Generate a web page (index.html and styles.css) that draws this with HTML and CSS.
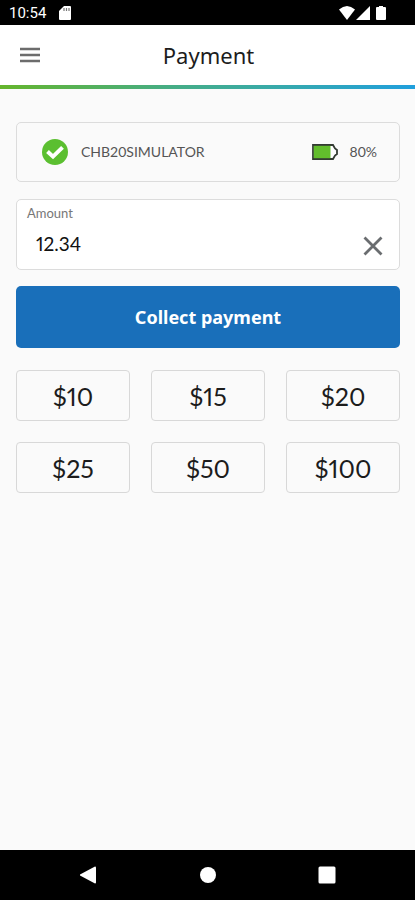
FILE: index.html
```html
<!DOCTYPE html>
<html lang="en">
<head>
<meta charset="utf-8">
<meta name="viewport" content="width=device-width, initial-scale=1">
<title>Payment</title>
<link rel="stylesheet" href="styles.css">
</head>
<body>
<div class="status-bar">
  <div class="status-group">
    <span class="clock">10:54</span>
    <svg width="12" height="14" viewBox="0 0 12 14" aria-hidden="true"><path d="M5 0h6a1 1 0 0 1 1 1v12a1 1 0 0 1-1 1H1a1 1 0 0 1-1-1V5z" fill="#fff"/><path d="M5 2v3M7.500 2v3M10 2v3" stroke="#777" stroke-width="1.200"/></svg>
  </div>
  <svg width="48" height="14" viewBox="0 0 48 14" aria-hidden="true" fill="#fff"><path d="M0 3.500Q8-3.500 16 3.500L8 14z"/><path d="M31 0v14H17z"/><path d="M40 0h4v1h2q1 0 1 1v11q0 1-1 1h-8q-1 0-1-1V2q0-1 1-1h2z"/></svg>
</div>
<header class="app-bar">
  <button class="icon-button" type="button" aria-label="Menu">
    <svg width="20" height="16" viewBox="0 0 20 16" stroke="#6c6c6c" stroke-width="2.500"><path d="M0 2h20M0 8h20M0 14h20"/></svg>
  </button>
  <h1>Payment</h1>
</header>
<main>
  <section class="reader">
    <svg width="26" height="26" viewBox="0 0 26 26" aria-hidden="true"><circle cx="13" cy="13" r="13" fill="#5bbf30"/><path d="M5.500 12.500l5.500 5.100 9.500-9.200" fill="none" stroke="#fff" stroke-width="4"/></svg>
    <span class="reader-name">CHB20SIMULATOR</span>
    <svg width="26" height="16" viewBox="0 0 26 16" aria-hidden="true"><path d="M1 1h20l2 3.500 2 1.500v4l-2 1.500L21 15H1z" fill="#fff" stroke="#333b33" stroke-width="1.800"/><path d="M1.800 1.800H18.500v12.400H1.800z" fill="#62bd2c"/></svg>
    <span class="reader-level">80%</span>
  </section>
  <form class="payment">
    <div class="field">
      <label for="amount">Amount</label>
      <div class="field-row">
        <input id="amount" type="text" inputmode="decimal" value="12.34">
        <button class="icon-button" type="button" aria-label="Clear amount">
          <svg width="20" height="20" viewBox="0 0 20 20" stroke="#6a6d70" stroke-width="2.800"><path d="M1.500 1.500l17 17M18.500 1.500l-17 17"/></svg>
        </button>
      </div>
    </div>
    <button class="collect" type="button">Collect payment</button>
    <div class="presets">
      <button type="button">$10</button>
      <button type="button">$15</button>
      <button type="button">$20</button>
      <button type="button">$25</button>
      <button type="button">$50</button>
      <button type="button">$100</button>
    </div>
  </form>
</main>
<nav class="system-nav">
  <button class="icon-button" type="button" aria-label="Back"><svg width="18" height="18" viewBox="0 0 18 18" fill="#fff"><path d="M16 0.500q1 0 1 1v15q0 1-1 1L1 9.500v-1z"/></svg></button>
  <button class="icon-button" type="button" aria-label="Home"><svg width="18" height="18" viewBox="0 0 18 18" fill="#fff"><circle cx="9" cy="9" r="8"/></svg></button>
  <button class="icon-button" type="button" aria-label="Recent apps"><svg width="18" height="18" viewBox="0 0 18 18" fill="#fff"><rect x="0.500" y="0.500" width="17" height="17" rx="1.500"/></svg></button>
</nav>
</body>
</html>
```
FILE: styles.css
```css
* {
  box-sizing: border-box;
}

body {
  margin: 0;
  min-height: 100vh;
  display: flex;
  flex-direction: column;
  background: #fafafa;
  color: #1c1c1c;
  font-family: "Noto Sans", sans-serif;
}

button,
input {
  margin: 0;
  padding: 0;
  border: 0;
  background: none;
  color: inherit;
  font: inherit;
}

svg {
  display: block;
  flex: none;
}

.status-bar {
  display: flex;
  align-items: center;
  justify-content: space-between;
  padding: 1px 28px 0 9px;
  height: 25px;
  background: #000;
  color: #fff;
}

.status-group {
  display: flex;
  align-items: center;
  gap: 13px;
}

.clock {
  font: 400 15px/20px Roboto, sans-serif;
}

.app-bar {
  display: grid;
  grid-template-columns: 20px 1fr 18px;
  align-items: center;
  padding: 0 20px 4px;
  height: 64px;
  background:
    linear-gradient(90deg, #65b52c, #46ad83 40%, #38aaa8 65%, #209fdd) bottom / 100% 4px no-repeat,
    #fff;
}

h1 {
  margin: 0;
  font-size: 22px;
  line-height: 32px;
  font-weight: 400;
  text-align: center;
}

main {
  flex: 1;
  padding: 33px 15px 24px 16px;
}

.reader {
  display: flex;
  align-items: center;
  padding: 0 22px 0 25px;
  height: 60px;
  border: 1px solid #dcdcdc;
  border-radius: 5px;
  color: #555;
  font: 400 14px/20px Lato, sans-serif;
}

.reader-name {
  flex: 1;
  margin-left: 13px;
}

.reader-level {
  margin-left: 12px;
}

.field {
  margin-top: 17px;
  padding: 5px 16px 4px 10px;
  border: 1px solid #dcdcdc;
  border-radius: 5px;
  background: #fff;
}

.field label {
  display: block;
  color: #777;
  font: 400 13px/16px Lato, sans-serif;
}

.field-row {
  display: flex;
  align-items: flex-end;
  padding: 0 0 9px 9px;
  height: 44px;
}

.field input {
  flex: 1;
  min-width: 0;
  outline: 0;
  color: #111;
  font: 400 19px/24px Lato, sans-serif;
  font-variant-numeric: proportional-nums;
}

.collect {
  display: block;
  width: 100%;
  height: 62px;
  margin-top: 16px;
  border-radius: 5px;
  background: #196fba;
  color: #fff;
  font-size: 18px;
  font-weight: 700;
}

.presets {
  display: grid;
  grid-template-columns: repeat(3, 1fr);
  gap: 21px;
  margin-top: 22px;
}

.presets button {
  height: 51px;
  border: 1px solid #d8d8d8;
  border-radius: 4px;
  font: 400 25px/32px Lato, sans-serif;
  font-variant-numeric: proportional-nums;
}

.system-nav {
  display: flex;
  align-items: center;
  justify-content: space-between;
  padding: 0 79px;
  height: 50px;
  background: #000;
}
```
